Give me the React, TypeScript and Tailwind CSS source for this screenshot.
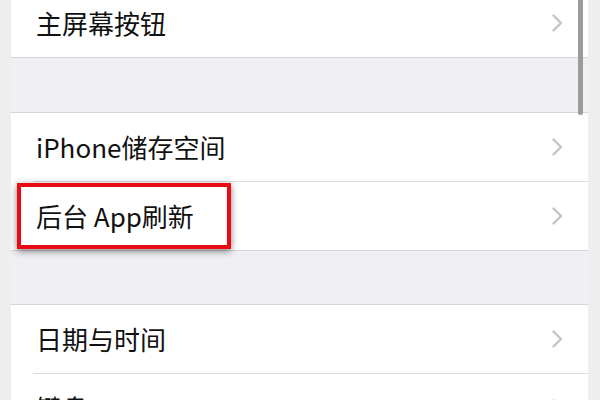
import React from 'react';

const Chevron = () => (
    <svg width="13" height="20" viewBox="0 0 13 20" className="shrink-0">
        <polyline points="2.5,2.5 10,10 2.5,17.5" fill="none" stroke="#c4c4c8" strokeWidth="2.4" strokeLinecap="round" strokeLinejoin="round" />
    </svg>
);

const Row = ({ label, children }: { label: string; children?: React.ReactNode }) => (
    <div className="relative flex h-[68px] items-center justify-between bg-white pl-[25px] pr-[24px]">
        <span className="text-[26px] leading-none text-[#111]">{label}</span>
        <Chevron />
        {children}
    </div>
);

const Line = ({ inset }: { inset?: boolean }) => (
    <div className={inset ? 'h-px bg-white pl-[22px]' : 'h-px bg-[#d6d6da]'}>
        {inset && <div className="h-px bg-[#dcdce0]" />}
    </div>
);

const Gap = () => <div className="h-[53px] bg-[#f0f0f4]" />;

export default function App() {
    return (
        <div
            className="flex h-[400px] w-[600px] overflow-hidden bg-[#eeeeee]"
            style={{ fontFamily: '"Noto Sans CJK SC", "Noto Sans", sans-serif' }}
        >
            <div className="w-[11px] shrink-0 bg-[#eeeeee]" />
            <div className="relative flex-1 overflow-hidden bg-white">
                <div className="-mt-[11px] flex flex-col">
                    <Row label="主屏幕按钮" />
                    <Line />
                    <div className="h-[54px] bg-[#f0f0f4]" />
                    <Line />
                    <Row label="iPhone储存空间" />
                    <Line inset />
                    <Row label="后台 App刷新">
                        <div className="absolute left-[6px] top-[1px] h-[66px] w-[214px] border-4 border-[#ea0b14] shadow-[0_2px_7px_rgba(0,0,0,0.5)]" />
                    </Row>
                    <Line />
                    <Gap />
                    <Line />
                    <Row label="日期与时间" />
                    <Line inset />
                    <Row label="键盘" />
                </div>
                <div className="absolute -top-[10px] right-[5px] h-[125px] w-[5px] rounded-full bg-[#9b9b9b]" />
            </div>
            <div className="w-[12px] shrink-0 bg-[#eeeeee]" />
        </div>
    );
}
